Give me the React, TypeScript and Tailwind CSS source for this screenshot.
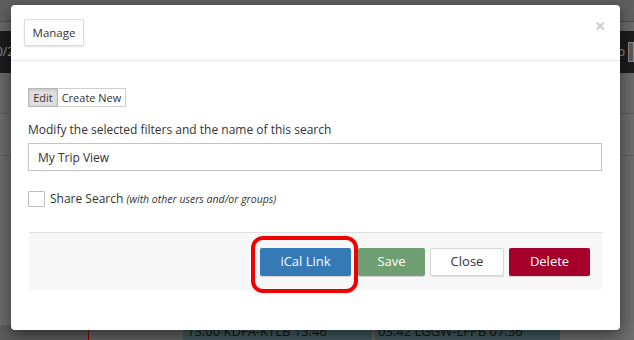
export default function App() {
  return (
    <div className="relative h-[340px] w-[634px] overflow-hidden bg-[#6a6a6a] font-['Open_Sans',sans-serif]">
      {/* page behind the backdrop */}
      <div className="flex h-full flex-col">
        <div className="h-[21px] bg-[#606060]" />
        <div className="h-px bg-[#4c4c4c]" />
        <div className="h-[9px] bg-[#6a6a6a]" />
        <div className="flex h-[42px] items-center justify-between bg-[#1c1c1c] text-[12px] text-[#9a9a9a]">
          <span className="-ml-[4px]">0/2</span>
          <div className="flex items-center gap-[3px]">
            <span>p</span>
            <span className="h-[20px] w-[6px] border border-[#8a8a8a] bg-[#5a5a5a]" />
          </div>
        </div>
        <div className="h-[40px] bg-[#6a6a6a]" />
        <div className="h-px bg-[#5e5e5e]" />
        <div className="h-[41px] bg-[#6c6c6c]" />
        <div className="h-px bg-[#5e5e5e]" />
        <div className="h-[169px] bg-[#6c6c6c]" />
        <div className="flex h-[15px] text-[13px] leading-[12px] text-[#151515]">
          <div className="w-[88px] bg-[#5c5c5c]" />
          <div className="w-px bg-[#8a0000]" />
          <div className="w-[94px] bg-[#626262]" />
          <div className="w-[189px] overflow-hidden whitespace-nowrap bg-[#41585c] pl-[4px]">13:00 KDFA-KTLB 13:46</div>
          <div className="w-[3px] bg-[#626262]" />
          <div className="w-[185px] overflow-hidden whitespace-nowrap bg-[#41585c] pl-[3px]">03:42 LGGW-LFPB 07:36</div>
          <div className="flex-1 bg-[#6e6e6e]" />
        </div>
      </div>

      {/* modal */}
      <div className="absolute left-[11px] top-[5px] flex h-[325px] w-[609px] flex-col rounded-[4px] bg-white text-[#333] shadow-[0_5px_15px_rgba(0,0,0,0.5)]">
        <div className="flex items-start justify-between border-b border-[#e5e5e5] pb-[14px] pl-[13px] pr-[13px] pt-[14px]">
          <button className="h-[27px] w-[60px] rounded-[2px] border border-[#dcdcdc] bg-white text-[11.5px] text-[#333] shadow-[0_1px_2px_rgba(0,0,0,0.12)]">
            Manage
          </button>
          <span className="mr-[1px] mt-[-3px] text-[20px] font-bold leading-none text-black/20">×</span>
        </div>

        <div className="flex flex-1 flex-col pl-[17px] pr-[18px]">
          <div className="mt-[27px] flex h-[19px] w-fit text-[11px] leading-[17px] text-[#333]">
            <span className="w-[30px] border border-[#b8b8b8] bg-[#e0e0e0] text-center shadow-[inset_0_1px_3px_rgba(0,0,0,0.15)]">Edit</span>
            <span className="w-[68px] border border-l-0 border-[#cfcfcf] bg-white text-center">Create New</span>
          </div>

          <p className="mt-[14px] text-[12px] leading-[18px]">Modify the selected filters and the name of this search</p>

          <input
            readOnly
            value="My Trip View"
            className="mt-[4px] h-[28px] w-full border border-[#c4c4c4] pl-[9px] text-[12px] text-[#333] outline-none"
          />

          <label className="mt-[20px] flex h-[16px] items-center text-[12px]">
            <span className="h-[16px] w-[17px] rounded-[1px] border border-[#bdbdbd] bg-white" />
            <span className="ml-[5px]">
              Share Search <i className="text-[10.5px]">(with other users and/or groups)</i>
            </span>
          </label>

          <div className="ml-px mt-[25px] flex h-[58px] items-start justify-end border-t border-[#dedede] bg-[#f7f7f7] pr-[12px] pt-[15px]">
            <button className="h-[28px] w-[91px] rounded-[2px] bg-[#337ab7] text-[13px] text-white shadow-[0_1px_1px_rgba(0,0,0,0.15)]">
              iCal Link
            </button>
            <button className="ml-[7px] h-[28px] w-[67px] rounded-[2px] bg-[#6e9e72] text-[13px] text-white shadow-[0_1px_1px_rgba(0,0,0,0.15)]">
              Save
            </button>
            <button className="ml-[5px] h-[28px] w-[74px] rounded-[2px] border border-[#d6d6d6] bg-white text-[13px] text-[#333] shadow-[0_1px_1px_rgba(0,0,0,0.1)]">
              Close
            </button>
            <button className="ml-[5px] h-[28px] w-[81px] rounded-[2px] bg-[#a4002a] text-[13px] text-white shadow-[0_1px_1px_rgba(0,0,0,0.15)]">
              Delete
            </button>
          </div>
        </div>
      </div>

      {/* red highlight annotation */}
      <div className="absolute left-[251px] top-[236px] h-[57px] w-[107px] rounded-[12px] border-[4px] border-[#f00000]" />
    </div>
  )
}
